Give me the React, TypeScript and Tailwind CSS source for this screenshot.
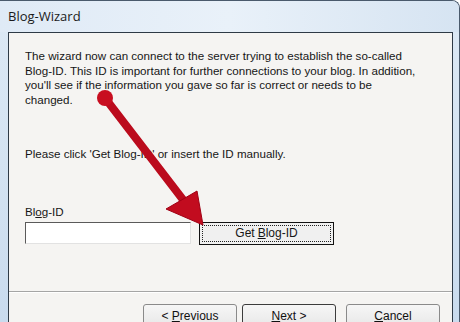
const font = { fontFamily: '"Liberation Sans", Arial, sans-serif' };

const Arrow = () => (
  <svg className="absolute left-0 top-0 pointer-events-none" width="460" height="322" viewBox="0 0 460 322">
    <line x1="105" y1="97" x2="184" y2="200" stroke="#bb0b1d" strokeWidth="8" strokeLinecap="round" />
    <polygon points="203,224 166,208 197,190" fill="#c20c1f" stroke="#a00014" strokeWidth="1" strokeLinejoin="round" />
    <circle cx="105" cy="97" r="8" fill="#c80e20" />
  </svg>
);

const WinButton = ({ children, focused }: { children: React.ReactNode; focused?: boolean }) => (
  <div
    className={
      'h-[23px] w-[94px] flex items-center justify-center rounded-[3px] text-[12px] text-[#111] bg-gradient-to-b from-[#f6f6f6] to-[#e8e8e8] ' +
      (focused ? 'border border-[#3c3c3c]' : 'border border-[#8a8a8a]')
    }
  >
    {children}
  </div>
);

export default function App() {
  return (
    <div
      className="relative w-[460px] h-[322px] overflow-hidden rounded-tr-[8px] border-t border-r border-[#4a5a6c] bg-gradient-to-b from-[#dde9f5] via-[#d4e3f2] to-[#c9dbee] flex flex-col"
      style={font}
    >
      {/* title bar */}
      <div className="h-[31px] flex items-center pl-2 shrink-0 bg-gradient-to-r from-[#dfeaf6] via-[#e9f1f9] to-[#d6e4f2]">
        <span className="text-[13px] text-[#1a1a1a]" style={{ fontFamily: '"Open Sans", "Liberation Sans", sans-serif' }}>
          Blog-Wizard
        </span>
      </div>

      {/* client area */}
      <div className="flex-1 flex ml-[8px] mr-[6px]">
        <div className="flex-1 border-t border-l border-r border-[#2e3a46] bg-[#f5f4f2] flex flex-col">
          <div className="pl-[16px] pt-[16px] text-[11.6px] leading-[14.5px] text-[#161616] whitespace-nowrap">
            <p>
              The wizard now can connect to the server trying to establish the so-called
              <br />
              Blog-ID. This ID is important for further connections to your blog. In addition,
              <br />
              you'll see if the information you gave so far is correct or needs to be
              <br />
              changed.
            </p>
            <p className="mt-[40px]">Please click 'Get Blog-ID' or insert the ID manually.</p>

            <p className="mt-[43px] mb-[3px]">
              Bl<span className="underline">o</span>g-ID
            </p>
            <div className="flex items-start gap-[8px]">
              <div className="w-[166px] h-[22px] bg-white border-t border-l border-[#5a5a5a] border-r border-b border-r-[#e2e2e2] border-b-[#e2e2e2]" />
              <div className="w-[135px] h-[23px] border border-[#111] bg-[#f0f0f0] p-[2px]">
                <div className="w-full h-full border border-dotted border-[#222] flex items-center justify-center text-[12px]">
                  Get <span className="underline ml-[3px]">B</span>log-ID
                </div>
              </div>
            </div>
          </div>

          <div className="mt-[46px] border-t border-[#a5a5a5] border-b border-b-white" />

          <div className="flex pt-[11px] pl-[134px]">
            <WinButton>
              &lt;&nbsp;<span className="underline">P</span>revious
            </WinButton>
            <div className="ml-[5px]">
              <WinButton focused>
                <span className="underline">N</span>ext&nbsp;&gt;
              </WinButton>
            </div>
            <div className="ml-[10px]">
              <WinButton>
                <span className="underline">C</span>ancel
              </WinButton>
            </div>
          </div>
        </div>
      </div>

      <Arrow />
    </div>
  );
}
